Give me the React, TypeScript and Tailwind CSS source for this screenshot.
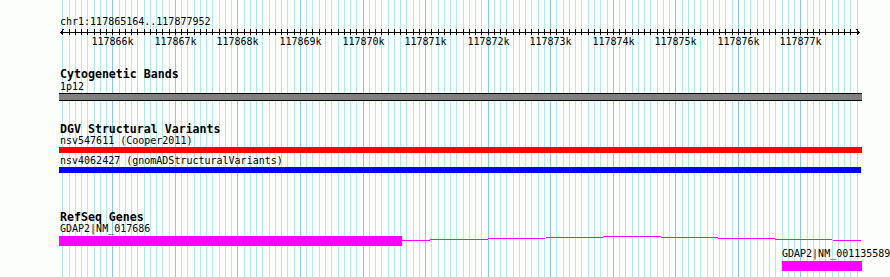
import React from 'react';

const START = 117865164;
const END = 117877952;
const X0 = 60;
const SPAN = 800;

const toX = (bp: number) => X0 + ((bp - START) * SPAN) / (END - START);

const gridBps: number[] = [];
for (let bp = 117865200; bp < END; bp += 100) gridBps.push(bp);
const majors = gridBps.filter((bp) => bp % 1000 === 0);

const small = "font-['DejaVu_Sans_Mono',monospace] text-[10px] leading-[12px] text-black whitespace-nowrap";
const bold = "font-['DejaVu_Sans_Mono',monospace] font-bold text-[11.6px] leading-[12px] text-black whitespace-nowrap";

function Grid() {
  return (
    <svg className="absolute inset-0" width={890} height={277} shapeRendering="crispEdges">
      {gridBps.map((bp) => {
        const x = Math.round(toX(bp)) + 0.5;
        const major = bp % 1000 === 0;
        return <line key={bp} x1={x} x2={x} y1={0} y2={277} stroke={major ? '#87c8f0' : '#aeeaee'} strokeWidth={1} />;
      })}
    </svg>
  );
}

function Ruler() {
  const y = 4.5;
  return (
    <svg className="block" width={890} height={22} shapeRendering="crispEdges">
      <line x1={X0} x2={860} y1={y} y2={y} stroke="#000" />
      <polyline points={`${X0 + 3.5},1.5 ${X0 + 0.5},${y} ${X0 + 3.5},7.5`} fill="none" stroke="#000" />
      <polyline points={`856.5,1.5 859.5,${y} 856.5,7.5`} fill="none" stroke="#000" />
      {gridBps.map((bp) => {
        const x = Math.round(toX(bp)) + 0.5;
        return <line key={bp} x1={x} x2={x} y1={1} y2={7} stroke="#000" />;
      })}
      {majors.map((bp) => (
        <text
          key={bp}
          x={Math.round(toX(bp)) + 0.5}
          y={16.5}
          textAnchor="middle"
          className="font-['DejaVu_Sans_Mono',monospace] text-[10px]"
          fill="#000"
        >
          {`${bp / 1000}k`}
        </text>
      ))}
    </svg>
  );
}

export default function App() {
  return (
    <div className="relative w-[890px] h-[277px] overflow-hidden bg-[#fcfefc]">
      <Grid />
      <div className="relative">
        <div className={`pt-[16px] pl-[60px] ${small}`}>chr1:117865164..117877952</div>
        <Ruler />

        <div className={`mt-[18px] pl-[60px] ${bold}`}>Cytogenetic Bands</div>
        <div className={`mt-[1px] pl-[60px] ${small}`}>1p12</div>
        <div className="ml-[59px] w-[803px] h-[8px] border-y border-black bg-[#808080]" />

        <div className={`mt-[22px] pl-[60px] ${bold}`}>DGV Structural Variants</div>
        <div className={`pl-[60px] ${small}`}>nsv547611 (Cooper2011)</div>
        <div className="ml-[59px] w-[803px] h-[6px] bg-[#ff0000]" />
        <div className={`mt-[2px] pl-[60px] ${small}`}>nsv4062427 (gnomADStructuralVariants)</div>
        <div className="ml-[59px] w-[802px] h-[6px] bg-[#0000ff]" />

        <div className={`mt-[38px] pl-[60px] ${bold}`}>RefSeq Genes</div>
        <div className={`pl-[60px] ${small}`}>GDAP2|NM_017686</div>
        <div className="mt-[1px] flex h-[10px] pl-[59px]">
          <div className="w-[343px] h-[10px] bg-[#ff00ff]" />
          <svg width={460} height={10} shapeRendering="crispEdges">
            <polyline points="0,4.5 230,0.5 459,4.5" fill="none" stroke="#ff00ff" strokeWidth={1} />
          </svg>
        </div>
        <div className={`mt-[2px] pl-[782px] ${small}`}>GDAP2|NM_001135589</div>
        <div className="mt-[1px] ml-[782px] w-[80px] h-[10px] bg-[#ff00ff]" />
      </div>
    </div>
  );
}
